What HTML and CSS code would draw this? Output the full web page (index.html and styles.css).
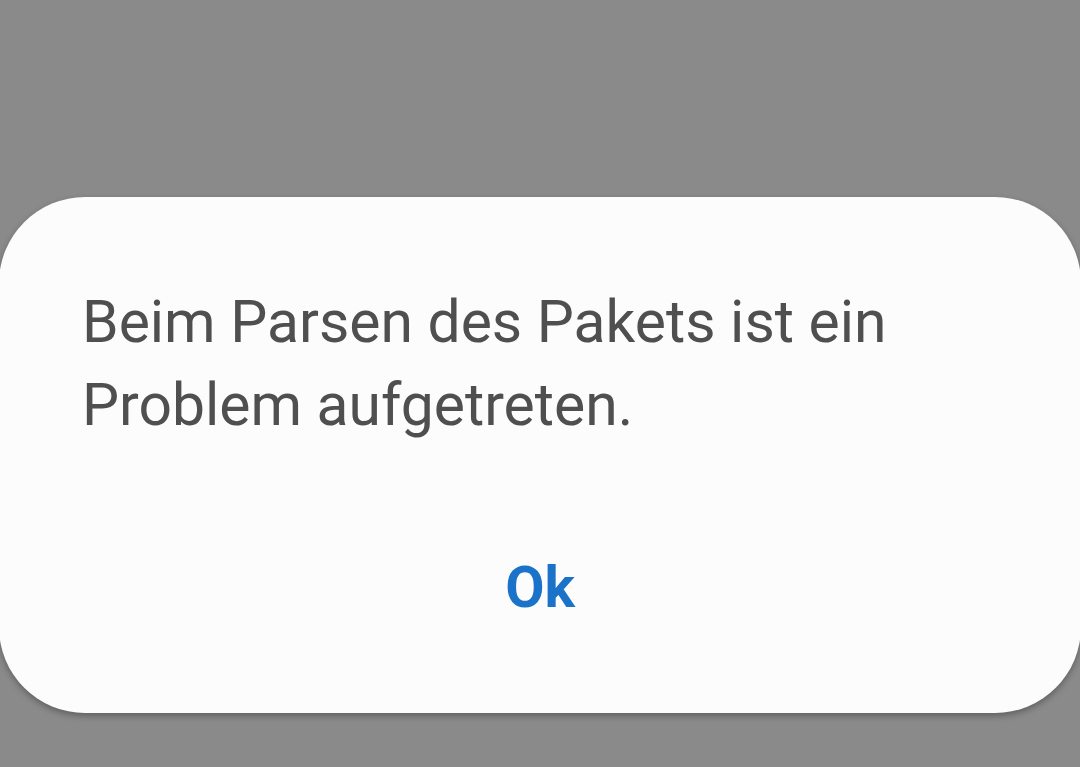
FILE: index.html
```html
<!DOCTYPE html>
<html lang="de">
<head>
    <meta charset="UTF-8">
    <meta name="viewport" content="width=device-width, initial-scale=1.0">
    <title>Fehler</title>
    <link rel="stylesheet" href="styles.css">
</head>
<body>
    <div class="dialog">
        <p class="message">Beim Parsen des Pakets ist ein Problem aufgetreten.</p>
        <div class="actions">
            <button class="ok-button">Ok</button>
        </div>
    </div>
</body>
</html>
```

FILE: styles.css
```css
:root {
    --bg-dim: #8a8a8a;
    --dialog-bg: #fcfcfc;
    --text-primary: #4f4f4f;
    --accent: #1a72c9;
}

body {
    font-family: Roboto, 'Noto Sans', sans-serif;
    background-color: var(--bg-dim);
    margin: 0;
    height: 767px;
    overflow: hidden;
}

.dialog {
    background-color: var(--dialog-bg);
    margin: 197px -1px 0;
    height: 516px;
    box-sizing: border-box;
    padding: 83px 83px 0;
    border-radius: 86px;
    box-shadow: 0 3px 6px rgba(0, 0, 0, 0.3);
}

.message {
    margin: 0;
    font-size: 58.8px;
    line-height: 83px;
    color: var(--text-primary);
    max-width: 860px;
}

.actions {
    display: flex;
    justify-content: center;
    margin-top: 107px;
}

.ok-button {
    font-family: inherit;
    font-size: 57px;
    font-weight: 700;
    line-height: 70px;
    color: var(--accent);
    background: none;
    border: none;
    padding: 0;
    cursor: pointer;
}
```
